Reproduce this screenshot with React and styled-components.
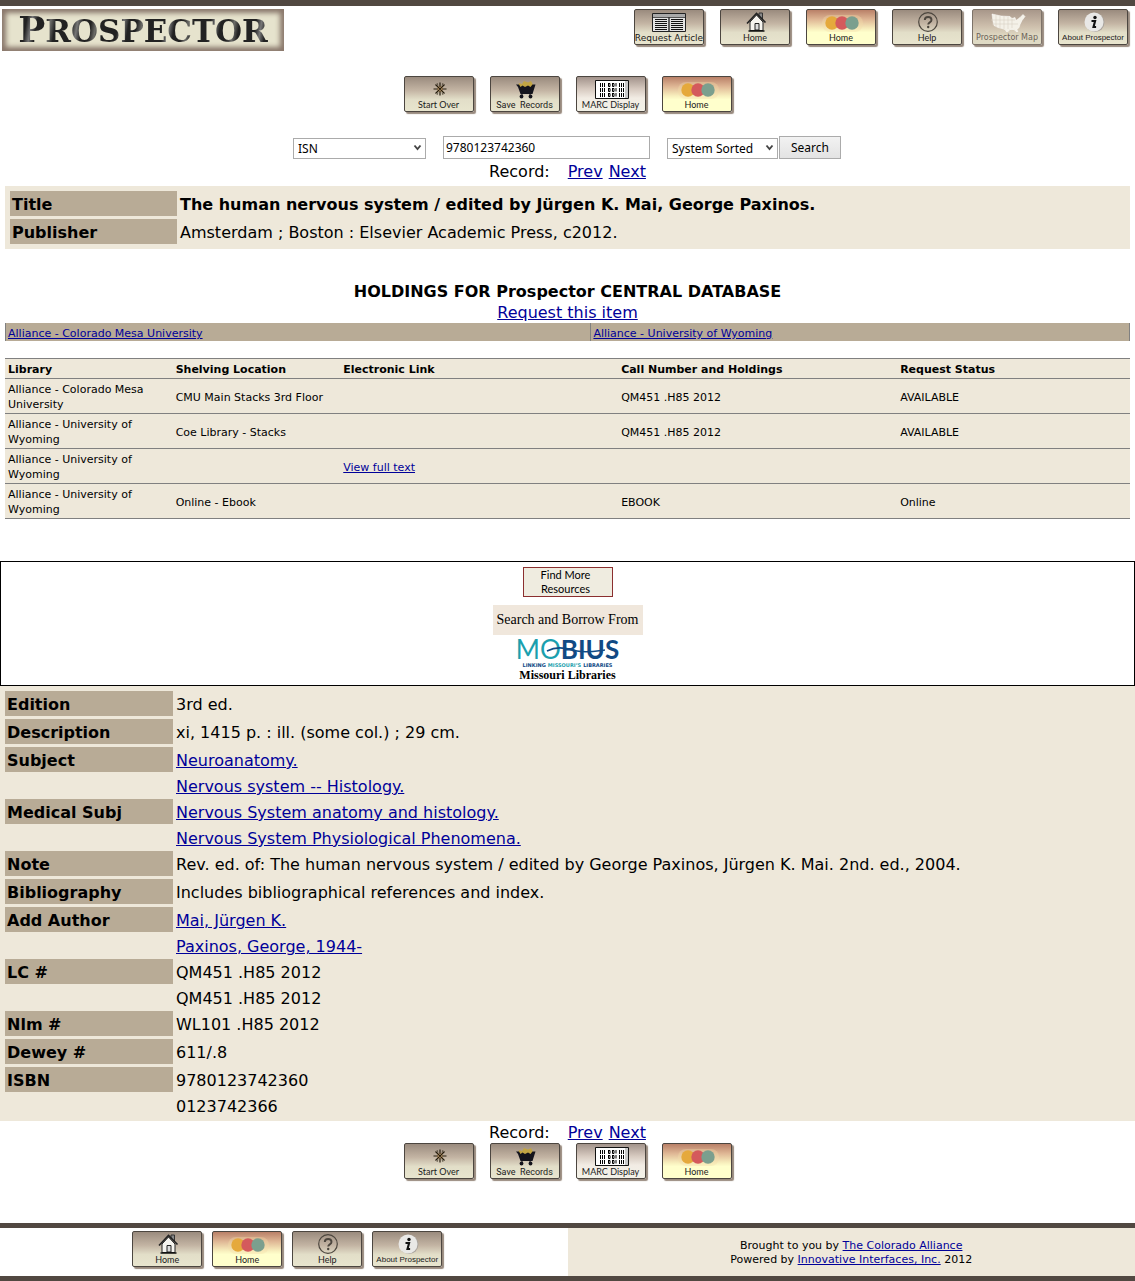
import React from "react";
import styled, { createGlobalStyle, css } from "styled-components";

const sans = `"DejaVu Sans", Verdana, sans-serif`;
const serif = `"Liberation Serif", "Times New Roman", serif`;
const panel = "#eee8da";
const label = "#b8ab96";
const bar = "#514841";
const teal = "#1b9fae";
const navy = "#114a84";

const Global = createGlobalStyle`
  *, *::before, *::after { box-sizing: border-box; }
  body { margin: 0; background: #fff; color: #000; font: 16px/21px ${sans}; }
  a { color: #000099; }
`;

const Page = styled.div`
  display: flex;
  flex-direction: column;
`;

const Header = styled.header`
  display: flex;
  justify-content: space-between;
  align-items: flex-start;
  border-top: 6px solid ${bar};
  padding: 3px 7px 0 2px;
`;

const Logo = styled.h1`
  display: flex;
  align-items: center;
  justify-content: center;
  margin: 0;
  width: 282px;
  height: 42px;
  background: #e6e3cd;
  box-shadow: inset 0 0 5px 4px #8a786c;
  font: bold 31px/42px "DejaVu Serif", serif;

  span {
    background: linear-gradient(100deg, #222 0 20%, #777 30%, #222 40% 55%, #6c6c68 65%, #222 75%);
    background-size: 46px 100%;
    background-clip: text;
    color: transparent;
  }
  span::first-letter { font-size: 36px; }
`;

const HeaderNav = styled.nav`
  display: flex;
  gap: 10px;
`;

const ButtonRow = styled.nav`
  display: flex;
  justify-content: center;
  gap: ${(p) => (p.$tight ? 10 : 16)}px;
`;

const tones = {
  plain: "#9a8b7e, #c4b5a4 40%, #e2dec8 66%, #e8e5ce",
  yellow: "#b98068, #dfb795 28%, #f8f0be 56%, #ffffcc 66%",
  pale: "#a2938b, #d6c9bf 35%, #f2ece4 62%, #f3f2e8",
  dim: "#a8978a, #cbbcaa 45%, #dfd8c2 75%, #dfdbc5",
};

const faces = {
  lato: `9px/11px Lato, sans-serif`,
  roboto: `9px/12px Roboto, sans-serif`,
  arial: `8px/12px "Liberation Sans", Arial, sans-serif`,
  wide: `9px/12px ${sans}`,
  small: `8px/12px ${sans}`,
};

const ImageButton = styled.a`
  display: flex;
  flex-direction: column;
  align-items: center;
  width: 70px;
  height: 36px;
  padding-top: 1px;
  border: 1px solid ${(p) => (p.$tone === "dim" ? "#7d7369" : "#4c4640")};
  border-radius: 2px;
  background: linear-gradient(${(p) => tones[p.$tone || "plain"]});
  box-shadow: 2px 2px 1px #988a7e;
  color: ${(p) => (p.$tone === "dim" ? "#6b6258" : "#1a1a1a")};
  font: ${(p) => faces[p.$face || "lato"]};
  text-decoration: none;
  white-space: nowrap;

  svg { flex: none; display: block; }
`;

const Toolbar = styled.div`
  padding-top: ${(p) => p.$top}px;
`;

const SearchForm = styled.form`
  display: flex;
  justify-content: center;
  align-items: center;
  padding-top: 24px;
`;

const control = css`
  border: 1px solid #ababab;
  border-radius: 0;
  background: #fff;
  color: #000;
  font: 12px/17px "Noto Sans", sans-serif;
`;

const SelectBox = styled.label`
  position: relative;
  width: ${(p) => p.$width}px;
  height: 21px;

  svg { position: absolute; right: 4px; top: 7px; pointer-events: none; }
`;

const Select = styled.select`
  ${control}
  appearance: none;
  width: 100%;
  height: 21px;
  padding: 0 4px;
`;

const Query = styled.input`
  ${control}
  width: 207px;
  height: 23px;
  margin: 0 17px;
  padding: 1px 2px;
`;

const Submit = styled.button`
  ${control}
  width: 62px;
  height: 23px;
  margin: 0 1px;
  padding: 0;
  background: linear-gradient(#f2f2f2, #e3e3e3);
`;

const Record = styled.div`
  display: flex;
  justify-content: center;
  gap: 6px;
  padding-top: ${(p) => p.$top}px;

  span { margin-right: 12px; }
`;

const Summary = styled.div`
  margin: 4px 5px 0;
  padding: 2px;
  background: ${panel};
`;

const Details = styled.div`
  padding: 2px;
  background: ${panel};
`;

const Bib = styled.table`
  width: 100%;
  border-spacing: 3px;
  line-height: 19px;

  th {
    width: ${(p) => p.$label}px;
    padding: 4px 2px 2px;
    background: ${label};
    text-align: left;
    vertical-align: top;
  }
  td { padding: 2px 0 0; }
`;

const HoldingsTitle = styled.h2`
  margin: 32px 0 0;
  font-size: 16px;
  line-height: 21px;
  text-align: center;
`;

const RequestLine = styled.div`
  text-align: center;
`;

const Jump = styled.ul`
  display: grid;
  grid-template-columns: 25fr 23fr;
  margin: 0 5px;
  padding: 0;
  list-style: none;
  border-right: 1px solid #808080;
  background: ${label};
  font-size: 11px;
  line-height: 15px;

  li { border-left: 1px solid #808080; padding: 3px 0 0 2px; }
`;

const Holdings = styled.div`
  margin: 17px 5px 0;
  background: ${panel};

  table {
    width: 100%;
    table-layout: fixed;
    border-collapse: collapse;
    font-size: 11px;
    line-height: 15px;
  }
  tr { border-top: 1px solid #808080; border-bottom: 1px solid #808080; }
  th { text-align: left; padding: 3px 3px 1px; }
  td { height: 35px; padding: 3px 3px 1px; }
`;

const Col = styled.col`
  width: ${(p) => p.$share}%;
`;

const Partners = styled.section`
  display: flex;
  flex-direction: column;
  align-items: center;
  height: 125px;
  margin-top: 42px;
  padding-top: 5px;
  border: 1px solid #000;
`;

const FindMore = styled.a`
  width: 90px;
  height: 30px;
  padding-right: 4px;
  border: 1px solid #8b2f2f;
  background: #efece0;
  color: #000;
  font: 11px/14px Lato, sans-serif;
  text-align: center;
  text-decoration: none;
`;

const Borrow = styled.a`
  width: 150px;
  margin-top: 8px;
  background: #f0e7dc;
  color: #000;
  font: 14px/30px ${serif};
  text-align: center;
  text-decoration: none;
  white-space: nowrap;
`;

const Mobius = styled.a`
  display: flex;
  flex-direction: column;
  align-items: center;
  margin-top: 1px;
  text-decoration: none;
  color: #000;
  font: bold 12px/14px ${serif};
`;

const Wordmark = styled.span`
  position: relative;
  display: flex;
  color: ${navy};
  font: 26px/26px Lato, sans-serif;

  b { font-weight: 700; }
  svg { position: absolute; left: 30px; top: 9px; }
`;

const Tagline = styled.span`
  display: flex;
  gap: 2px;
  color: ${navy};
  font: bold 5px/6px "DejaVu Sans", sans-serif;
`;

const Teal = styled.span`
  color: ${teal};
`;

const Footer = styled.footer`
  display: grid;
  grid-template-columns: 1fr 1fr;
  height: 58px;
  margin-top: 44px;
  border: solid ${bar};
  border-width: 5px 0;
`;

const FooterNav = styled.div`
  padding: 3px 0 0 7px;
`;

const Credits = styled.div`
  display: flex;
  flex-direction: column;
  align-items: center;
  justify-content: center;
  padding-top: 2px;
  background: ${panel};
  font-size: 11px;
  line-height: 14px;
`;

const Icon = ({ children }) => (
  <svg width="66" height="21" viewBox="0 0 66 21" aria-hidden="true">{children}</svg>
);

const ArticleIcon = () => (
  <Icon>
    <path d="M16.500 2.500h33v18h-33z" fill="#e4e4e4" stroke="#222" />
    <path d="M17 3h32v3H17z" fill="#a9a9a9" />
    <path d="M17 6.500h32" stroke="#555" />
    <path d="M33 6v14" stroke="#333" strokeWidth="1.500" />
    <path d="M19 8.500h12M19 10.500h12M19 12.500h12M19 14.500h12M19 16.500h12M19 18.500h12M35 8.500h12M35 10.500h12M35 12.500h12M35 14.500h12M35 16.500h12M35 18.500h12" stroke="#111" />
  </Icon>
);

const HouseIcon = () => (
  <Icon>
    <path d="M37 6V2h3.500v7" fill="#888" stroke="#333" />
    <path d="M28 19.500V11l6.500-7 6.500 7v8.500z" fill="#f6f4ef" stroke="#222" />
    <path d="M25 12.500 34.500 2.500l9 9" fill="none" stroke="#222" strokeWidth="1.600" />
    <path d="M33 19v-6.500h4V19z" fill="#ddd" stroke="#222" />
    <path d="M26.500 20h16" stroke="#111" strokeWidth="1.500" />
  </Icon>
);

const DotsIcon = () => (
  <Icon>
    <rect x="14" y="4" width="41" height="17" rx="8" fill="#f3dca8" opacity=".35" />
    <circle cx="24" cy="12" r="6.700" fill="#e5a93c" />
    <circle cx="34" cy="12" r="6.700" fill="#d45a5c" />
    <circle cx="44" cy="12" r="6.700" fill="#7b9f8e" />
  </Icon>
);

const HelpIcon = () => (
  <Icon>
    <circle cx="34" cy="11" r="9.300" fill="none" stroke="#4c463e" strokeWidth="1.200" />
    <path d="M30.800 9c0-4 6.700-4 6.700 0 0 2.500-3.300 2.200-3.300 4.500" fill="none" stroke="#4c463e" strokeWidth="1.900" />
    <circle cx="34.200" cy="16" r="1.200" fill="#4c463e" />
  </Icon>
);

const MapIcon = () => (
  <Icon>
    <path d="M18 3l9 2 9 .500 2 2 3-1 1 3 4-3 3-3 2 2-3 4-2 4-1 3-2 2 1 3-2-1-2-2-4 0-3 3-2-3-3-1-4-1-4-2-1-4z" fill="#f4f1e8" stroke="#fff" strokeWidth=".500" />
    <path d="M22 4v12M26 5v12M30 5v13M34 6v12M38 8v9M17 9h24M18 13h26" stroke="#d8d0c3" strokeWidth=".600" />
  </Icon>
);

const InfoIcon = () => (
  <Icon>
    <circle cx="35" cy="11.500" r="9.500" fill="#aaa49e" />
    <circle cx="34" cy="11" r="9.500" fill="#e9e8e6" />
    <circle cx="35" cy="6.500" r="1.700" fill="#111" />
    <path d="M31.500 10h3.600l-1.600 6h2.600" fill="none" stroke="#111" strokeWidth="2.100" />
  </Icon>
);

const StarIcon = () => (
  <Icon>
    <circle cx="34" cy="11" r="3" fill="#e7ae63" opacity=".6" />
    <path d="M34 4.500v4.500M34 13v4.500M27.500 11H32M36 11h4.500M29.500 6.500l9 9M38.500 6.500l-9 9" stroke="#241c0e" strokeWidth="1.200" fill="none" />
    <path d="M31 5l1 2.500M37 5l-1 2.500M31 17l1-2.500M37 17l-1-2.500" stroke="#241c0e" strokeWidth=".600" fill="none" />
  </Icon>
);

const CartIcon = () => (
  <Icon>
    <path d="M26 9l1-4 3 1 2-3 4 1.500 3-1.500 3 6z" fill="#c2a544" />
    <path d="M24 6.500h3l1.500 2.500 2-1.500 2.500 1.500 3-1.500 2.500 1.500 2-2.500h3l-3 9.500H28.500L26 9z" fill="#14141c" />
    <path d="M30 15v3M38 15v3" stroke="#14141c" />
    <circle cx="29.500" cy="18.500" r="1.900" fill="#14141c" />
    <circle cx="38.500" cy="18.500" r="1.900" fill="#14141c" />
  </Icon>
);

const MarcIcon = () => (
  <Icon>
    <path d="M17.500 2.500h33v18h-33z" fill="#fff" stroke="#111" />
    <path d="M47 3h3v17h-3z" fill="#c9c9c9" />
    {[5, 10, 15].map((y) => (
      <g key={y} stroke="#000" fill="none">
        <path d={`M22.500 ${y}v4M24.500 ${y}v4M26.500 ${y}v4M41.500 ${y}v4M43.500 ${y}v4M45.500 ${y}v4`} />
        <path d={`M30.500 ${y}v3.500h1.500v-3H30M34.500 ${y}v3.500H36v-3h-2M38 ${y}v3.500`} />
      </g>
    ))}
  </Icon>
);

const Chevron = () => (
  <svg width="9" height="7" viewBox="0 0 9 7" aria-hidden="true">
    <path d="M1.500 1.500 4.500 5l3-3.500" fill="none" stroke="#444" strokeWidth="1.900" />
  </svg>
);

const NavButton = ({ icon: Glyph, children, tone, face }) => (
  <ImageButton href="#" $tone={tone} $face={face}>
    <Glyph />
    {children}
  </ImageButton>
);

const RecordTools = ({ top }) => (
  <Toolbar $top={top}>
    <ButtonRow aria-label="Record tools">
      <NavButton icon={StarIcon}>Start Over</NavButton>
      <NavButton icon={CartIcon} face="roboto">Save&nbsp; Records</NavButton>
      <NavButton icon={MarcIcon} tone="pale">MARC Display</NavButton>
      <NavButton icon={DotsIcon} tone="yellow">Home</NavButton>
    </ButtonRow>
  </Toolbar>
);

const RecordNav = ({ top }) => (
  <Record $top={top}>
    <span>Record:</span>
    <a href="#">Prev</a>
    <a href="#">Next</a>
  </Record>
);

const holdings = [
  ["Alliance - Colorado Mesa University", "CMU Main Stacks 3rd Floor", "", "QM451 .H85 2012", "AVAILABLE"],
  ["Alliance - University of Wyoming", "Coe Library - Stacks", "", "QM451 .H85 2012", "AVAILABLE"],
  ["Alliance - University of Wyoming", "", "View full text", "", ""],
  ["Alliance - University of Wyoming", "Online - Ebook", "", "EBOOK", "Online"],
];

const details = [
  ["Edition", ["3rd ed."]],
  ["Description", ["xi, 1415 p. : ill. (some col.) ; 29 cm."]],
  ["Subject", ["Neuroanatomy.", "Nervous system -- Histology."], true],
  ["Medical Subj", ["Nervous System anatomy and histology.", "Nervous System Physiological Phenomena."], true],
  ["Note", ["Rev. ed. of: The human nervous system / edited by George Paxinos, Jürgen K. Mai. 2nd. ed., 2004."]],
  ["Bibliography", ["Includes bibliographical references and index."]],
  ["Add Author", ["Mai, Jürgen K.", "Paxinos, George, 1944-"], true],
  ["LC #", ["QM451 .H85 2012", "QM451 .H85 2012"]],
  ["Nlm #", ["WL101 .H85 2012"]],
  ["Dewey #", ["611/.8"]],
  ["ISBN", ["9780123742360", "0123742366"]],
];

export default function App() {
  return (
    <Page>
      <Global />
      <Header>
        <Logo><span>PROSPECTOR</span></Logo>
        <HeaderNav aria-label="Site">
          <ButtonRow as="div">
            <NavButton icon={ArticleIcon} face="wide">Request Article</NavButton>
            <NavButton icon={HouseIcon}>Home</NavButton>
            <NavButton icon={DotsIcon} tone="yellow">Home</NavButton>
            <NavButton icon={HelpIcon}>Help</NavButton>
          </ButtonRow>
          <ButtonRow as="div">
            <NavButton icon={MapIcon} tone="dim" face="small">Prospector Map</NavButton>
            <NavButton icon={InfoIcon} face="arial">About Prospector</NavButton>
          </ButtonRow>
        </HeaderNav>
      </Header>

      <RecordTools top={25} />
      <SearchForm onSubmit={(e) => e.preventDefault()}>
        <SelectBox $width={133}>
          <Select aria-label="Search index"><option>ISN</option></Select>
          <Chevron />
        </SelectBox>
        <Query aria-label="Search terms" defaultValue="9780123742360" />
        <SelectBox $width={111}>
          <Select aria-label="Sort order"><option>System Sorted</option></Select>
          <Chevron />
        </SelectBox>
        <Submit>Search</Submit>
      </SearchForm>
      <RecordNav top={2} />

      <Summary>
        <Bib $label={167}>
          <tbody>
            <tr>
              <th scope="row">Title</th>
              <td><strong>The human nervous system / edited by Jürgen K. Mai, George Paxinos.</strong></td>
            </tr>
            <tr>
              <th scope="row">Publisher</th>
              <td>Amsterdam ; Boston : Elsevier Academic Press, c2012.</td>
            </tr>
          </tbody>
        </Bib>
      </Summary>

      <HoldingsTitle>HOLDINGS FOR Prospector CENTRAL DATABASE</HoldingsTitle>
      <RequestLine><a href="#">Request this item</a></RequestLine>
      <Jump>
        <li><a href="#">Alliance - Colorado Mesa University</a></li>
        <li><a href="#">Alliance - University of Wyoming</a></li>
      </Jump>

      <Holdings>
        <table>
          <colgroup>
            <Col $share={14.9} />
            <Col $share={14.9} />
            <Col $share={24.7} />
            <Col $share={24.8} />
            <Col $share={20.7} />
          </colgroup>
          <thead>
            <tr>
              <th>Library</th>
              <th>Shelving Location</th>
              <th>Electronic Link</th>
              <th>Call Number and Holdings</th>
              <th>Request Status</th>
            </tr>
          </thead>
          <tbody>
            {holdings.map(([library, place, link, call, status], i) => (
              <tr key={i}>
                <td>{library}</td>
                <td>{place}</td>
                <td>{link && <a href="#">{link}</a>}</td>
                <td>{call}</td>
                <td>{status}</td>
              </tr>
            ))}
          </tbody>
        </table>
      </Holdings>

      <Partners>
        <FindMore href="#">Find More<br />Resources</FindMore>
        <Borrow href="#">Search and Borrow From</Borrow>
        <Mobius href="#">
          <Wordmark>
            <Teal>MO</Teal>
            <b>BIUS</b>
            <svg width="62" height="10" viewBox="0 0 62 10" aria-hidden="true">
              <path d="M1 6c12-6 20-2 30 0s20 0 28-1" fill="none" stroke={navy} strokeWidth="1.600" />
            </svg>
          </Wordmark>
          <Tagline>
            <span>LINKING</span>
            <Teal>MISSOURI’S</Teal>
            <span>LIBRARIES</span>
          </Tagline>
          Missouri Libraries
        </Mobius>
      </Partners>

      <Details>
        <Bib $label={168}>
          <tbody>
            {details.map(([name, values, linked]) =>
              values.map((value, i) => (
                <tr key={name + i}>
                  {i === 0 ? <th scope="row">{name}</th> : <td />}
                  <td>{linked ? <a href="#">{value}</a> : value}</td>
                </tr>
              ))
            )}
          </tbody>
        </Bib>
      </Details>

      <RecordNav top={1} />
      <RecordTools top={0} />

      <Footer>
        <FooterNav>
          <ButtonRow $tight aria-label="Footer">
            <NavButton icon={HouseIcon}>Home</NavButton>
            <NavButton icon={DotsIcon} tone="yellow">Home</NavButton>
            <NavButton icon={HelpIcon}>Help</NavButton>
            <NavButton icon={InfoIcon} face="arial">About Prospector</NavButton>
          </ButtonRow>
        </FooterNav>
        <Credits>
          <div>Brought to you by <a href="#">The Colorado Alliance</a></div>
          <div>Powered by <a href="#">Innovative Interfaces, Inc.</a> 2012</div>
        </Credits>
      </Footer>
    </Page>
  );
}
